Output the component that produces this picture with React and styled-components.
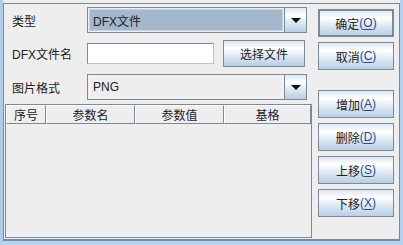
import React from 'react';
import styled, { createGlobalStyle } from 'styled-components';

const GlobalStyle = createGlobalStyle`
	html, body {
		margin: 0;
		padding: 0;
		background: #eeeeee;
	}
	body {
		font-family: "Liberation Sans", "Noto Sans CJK SC", sans-serif;
		font-size: 12px;
		color: #222;
	}
`

const Frame = styled.div`
	width: 403px;
	height: 245px;
	box-sizing: border-box;
	background: #eeeeee;
	border-left: 3px solid #aecdea;
	border-right: 3px solid #b3d1ee;
	border-bottom: 4px solid #b7d4ef;
	padding-top: 3px;
`
const Content = styled.div`
	height: 238px;
	box-sizing: border-box;
	border: 1px solid #7a8a99;
	border-bottom-width: 2px;
	display: flex;
`
const LeftPane = styled.div`
	width: 308px;
	display: flex;
	flex-direction: column;
	padding-top: 3px;
`
const Row = styled.div`
	display: flex;
	align-items: center;
	height: ${p => p.h}px;
	margin-bottom: 7px;
	padding-left: 8px;
`
const Label = styled.div`
	width: 75px;
	flex: none;
	color: #222;
`
const Combo = styled.div`
	width: 220px;
	height: 26px;
	box-sizing: border-box;
	border: 1px solid #7a8a99;
	display: flex;
	background: #eeeeee;
`
const ComboValue = styled.div`
	flex: 1;
	display: flex;
	align-items: center;
	padding-left: 3px;
	border: 1px solid ${p => p.focused ? '#c3d2e0' : '#f8f8f8'};
	background: ${p => p.focused ? '#a3b8cc' : '#eeeeee'};
	margin: 1px 0 1px 1px;
`
const ArrowButton = styled.div`
	width: 21px;
	display: flex;
	align-items: center;
	justify-content: center;
	border-left: 1px solid #7a8a99;
	background: linear-gradient(to bottom, #dde8f3 0%, #ffffff 30%, #dde8f3 60%, #b8cfe5 100%);
	margin-left: 1px;
`
const Arrow = styled.div`
	width: 0;
	height: 0;
	border-left: 5px solid transparent;
	border-right: 5px solid transparent;
	border-top: 5px solid #111;
	margin-top: 1px;
`
const TextField = styled.div`
	width: 127px;
	height: 21px;
	box-sizing: border-box;
	border: 1px solid #7a8a99;
	border-right-color: #b8c4cf;
	border-bottom-color: #b8c4cf;
	background: #ffffff;
`
const Button = styled.div`
	width: ${p => p.w}px;
	height: ${p => p.h || 28}px;
	flex: none;
	box-sizing: border-box;
	border: ${p => p.isDefault ? 2 : 1}px solid #7a8a99;
	background: linear-gradient(to bottom, #dde8f3 0%, #ffffff 30%, #dde8f3 60%, #b8cfe5 100%);
	display: flex;
	align-items: center;
	justify-content: center;
	color: #222;
	margin-left: ${p => p.ml || 0}px;
`
const Mnemonic = styled.span`
	color: #2f4684;
	u {
		text-decoration: underline;
		text-underline-offset: 2px;
	}
`
const TableBox = styled.div`
	margin-left: 1px;
	margin-top: -3px;
	width: 307px;
	flex: 1;
	box-sizing: border-box;
	border: 1px solid #7a8a99;
	background: #eeeeee;
	margin-bottom: 1px;
`
const HeaderRow = styled.div`
	display: grid;
	grid-template-columns: 40px 89px 89px 1fr;
	height: 19px;
`
const HeaderCell = styled.div`
	box-sizing: border-box;
	border-right: 1px solid #7a8a99;
	border-bottom: 1px solid #7a8a99;
	border-left: 1px solid #ffffff;
	border-top: 1px solid #ffffff;
	display: flex;
	align-items: center;
	justify-content: center;
	color: #222;
`
const ButtonColumn = styled.div`
	margin-left: 6px;
	padding-top: 5px;
	display: flex;
	flex-direction: column;
	gap: 5px;
`
const Spacer = styled.div`
	height: ${p => p.h}px;
`

const Btn = ({ text, letter, isDefault }) => (
	<Button w={76} isDefault={isDefault}>
		{text}<Mnemonic>(<u>{letter}</u>)</Mnemonic>
	</Button>
)

const columns = ['序号', '参数名', '参数值', '基格'];

export default function App() {
	return <>
		<GlobalStyle />
		<Frame>
			<Content>
				<LeftPane>
					<Row h={26}>
						<Label>类型</Label>
						<Combo>
							<ComboValue focused>DFX文件</ComboValue>
							<ArrowButton><Arrow /></ArrowButton>
						</Combo>
					</Row>
					<Row h={27}>
						<Label>DFX文件名</Label>
						<TextField />
						<Button w={82} h={27} ml={9}>选择文件</Button>
					</Row>
					<Row h={26}>
						<Label>图片格式</Label>
						<Combo>
							<ComboValue>PNG</ComboValue>
							<ArrowButton><Arrow /></ArrowButton>
						</Combo>
					</Row>
					<TableBox>
						<HeaderRow>
							{columns.map(c => <HeaderCell key={c}>{c}</HeaderCell>)}
						</HeaderRow>
					</TableBox>
				</LeftPane>
				<ButtonColumn>
					<Btn text="确定" letter="O" isDefault />
					<Btn text="取消" letter="C" />
					<Spacer h={10} />
					<Btn text="增加" letter="A" />
					<Btn text="删除" letter="D" />
					<Btn text="上移" letter="S" />
					<Btn text="下移" letter="X" />
				</ButtonColumn>
			</Content>
		</Frame>
	</>
}
